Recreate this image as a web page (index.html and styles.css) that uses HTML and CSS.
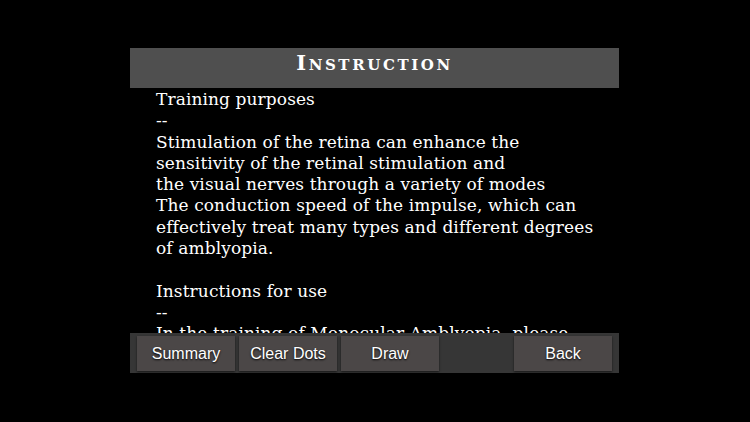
FILE: index.html
```html
<!DOCTYPE html>
<html>
<head>
<meta charset="utf-8">
<link rel="stylesheet" href="styles.css">
</head>
<body>
<div class="panel">
  <div class="header">Instruction</div>
  <div class="content">
    <p>Training purposes<br>--<br>Stimulation of the retina can enhance the<br>sensitivity of the retinal stimulation and<br>the visual nerves through a variety of modes<br>The conduction speed of the impulse, which can<br>effectively treat many types and different degrees<br>of amblyopia.<br><br>Instructions for use<br>--<br>In the training of Monocular Amblyopia, please</p>
  </div>
  <div class="toolbar">
    <div class="btn">Summary</div>
    <div class="btn">Clear Dots</div>
    <div class="btn">Draw</div>
    <div class="spacer"></div>
    <div class="btn">Back</div>
  </div>
</div>
</body>
</html>
```
FILE: styles.css
```css
html, body {
  margin: 0;
  padding: 0;
  background: #000;
  width: 750px;
  height: 422px;
  overflow: hidden;
}
.panel {
  width: 489px;
  margin: 48px 0 0 130px;
  display: flex;
  flex-direction: column;
}
.header {
  height: 40px;
  background: #4f4f4f;
  color: #fff;
  font-family: "DejaVu Serif", serif;
  font-weight: bold;
  font-variant: small-caps;
  font-size: 21px;
  letter-spacing: 2.6px;
  text-align: center;
  line-height: 30px;
}
.content {
  height: 245px;
  overflow: hidden;
  padding-left: 26px;
}
.content p {
  margin: 1px 0 0 0;
  color: #fff;
  font-family: "DejaVu Serif", serif;
  font-size: 17px;
  letter-spacing: 0.1px;
  line-height: 21.3px;
  white-space: nowrap;
}
.toolbar {
  height: 40px;
  background: #363636;
  display: flex;
  align-items: flex-start;
  padding: 3px 7px 0 7px;
  box-sizing: border-box;
  gap: 4px;
}
.spacer { flex: 1; }
.btn {
  width: 98px;
  height: 35px;
  flex: none;
  display: flex;
  align-items: center;
  justify-content: center;
  white-space: nowrap;
  background: #4b4747;
  color: #fff;
  font-family: "Liberation Sans", Arial, sans-serif;
  font-size: 16px;
  text-shadow: 0 1px 2px #000;
  box-shadow: 0 1px 2px rgba(0,0,0,0.6);
}
```
